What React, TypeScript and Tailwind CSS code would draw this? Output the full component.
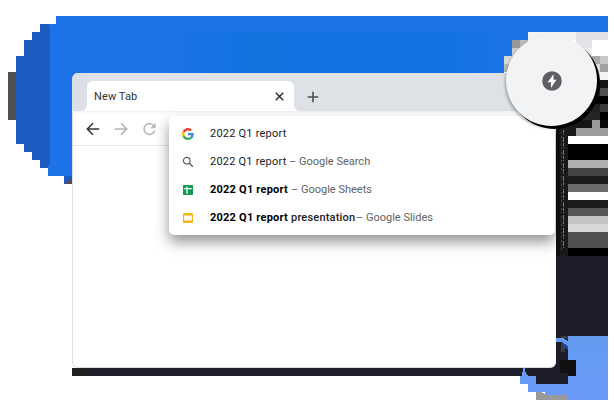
import React from "react";

type Block = [x: number, y: number, w: number, h: number, fill: string];

const blocks: Block[] = [
  [8, 72, 8, 48, "#505050"],
  [64, 176, 8, 8, "#505050"],
  [528, 32, 48, 8, "#f2f2f4"],
  [576, 32, 32, 8, "#e0e1e7"],
  [512, 40, 8, 8, "#999999"],
  [520, 40, 8, 8, "#bbbbbb"],
  [576, 40, 16, 8, "#e4e4e8"],
  [512, 48, 16, 8, "#cccccc"],
  [504, 56, 16, 8, "#d8d8d8"],
  [504, 64, 8, 8, "#bbbbbb"],
  [584, 48, 8, 8, "#eeeeee"],
  [592, 56, 8, 8, "#aaaaaa"],
  [600, 56, 8, 8, "#c8c8c8"],
  [592, 64, 8, 8, "#dddddd"],
  [600, 64, 8, 8, "#a2a2a2"],
  [592, 72, 8, 8, "#e4e4e4"],
  [600, 72, 8, 8, "#f4f4f4"],
  [592, 80, 8, 8, "#555555"],
  [600, 80, 8, 8, "#161616"],
  [592, 88, 8, 8, "#222222"],
  [600, 88, 8, 8, "#505050"],
  [592, 96, 16, 8, "#000000"],
  [584, 104, 16, 8, "#202020"],
  [600, 104, 8, 8, "#3a3a3a"],
  [576, 112, 24, 8, "#242424"],
  [600, 112, 8, 8, "#000000"],
  [576, 120, 16, 8, "#161616"],
  [592, 120, 8, 8, "#999999"],
  [600, 120, 8, 8, "#080808"],
  [568, 120, 8, 16, "#181818"],
  [576, 128, 32, 8, "#9b9b9b"],
  [568, 144, 40, 16, "#000000"],
  [568, 160, 40, 8, "#b0b0b0"],
  [568, 168, 40, 8, "#444444"],
  [568, 176, 40, 8, "#1c1c1c"],
  [568, 184, 40, 8, "#6d6d6d"],
  [568, 200, 40, 8, "#1c1c1c"],
  [568, 208, 40, 8, "#565656"],
  [568, 216, 40, 8, "#c4c4c4"],
  [568, 224, 40, 8, "#d7d7d7"],
  [568, 232, 40, 16, "#505050"],
  [568, 248, 40, 8, "#000000"],
  [568, 256, 40, 80, "#1d1d29"],
  [555, 118, 5, 138, "#0c1015"],
  [560, 118, 8, 138, "#191919"],
  [548, 256, 20, 112, "#1d1d27"],
  [72, 368, 16, 8, "#20201f"],
  [88, 368, 460, 8, "#1f1e2b"],
];

function Backdrop() {
  return (
    <svg className="absolute inset-0" width="614" height="410" shapeRendering="crispEdges" aria-hidden="true">
      <defs>
        <linearGradient id="sky" x1="0" y1="0" x2="0" y2="1">
          <stop offset="0" stopColor="#639cf0" />
          <stop offset="1" stopColor="#6b99fa" />
        </linearGradient>
        <linearGradient id="band" x1="0" y1="0" x2="1" y2="0">
          <stop offset="0" stopColor="#1c73e8" />
          <stop offset="0.25" stopColor="#1272e0" />
          <stop offset="0.8" stopColor="#1272e2" />
          <stop offset="1" stopColor="#1c73e8" />
        </linearGradient>
      </defs>
      <path d="M56 16H608V32H528V40H512V56H504V80H82V184H64V176H48V24H56Z" fill="#1c73e8" />
      <path d="M160 32H512V56H504V80H160Z" fill="url(#band)" />
      <path d="M40 24H49V29H50V165H48V168H40V160H32V152H24V144H16V56H24V40H32V32H40Z" fill="#1c5bbf" />
      {blocks.map(([x, y, w, h, fill], i) => (
        <rect key={i} x={x} y={y} width={w} height={h} fill={fill} />
      ))}
      <path d="M64 176H72V178L64 184Z" fill="#1c5bbf" />
      <path d="M563.5 130V248" stroke="#777" strokeWidth="1" strokeDasharray="3 1 1 2 5 1" />
      <path d="M561.5 132V252" stroke="#444" strokeWidth="1" strokeDasharray="1 3 2 2" />
      <path d="M568 336H608V400H568V397H545V392H528V384H520V368H568Z" fill="url(#sky)" />
      <path d="M536 392H541L547 395H568V400H536Z" fill="#999" />
      <path d="M525 368H576V360H548V368H525V371L528 376H536V384H568V376H576V360H548Z" fill="#1e1d2a" />
      <path d="M520 368H523L522 376H520Z" fill="#1e1d2a" />
      <path d="M560 360H576V376H568V373H560Z" fill="#111113" />
      <path d="M561 336H568V339H561ZM561 343H565V352H561Z" fill="#3a3b46" />
      <path d="M556 338H563L568 341V346L562 342H556Z" fill="#639cf0" />
      <path d="M562 342L568 346V350L564 347Z" fill="#1c4c98" />
    </svg>
  );
}

function BackIcon({ className }: { className: string }) {
  return (
    <svg className={className} width="14" height="14" viewBox="0 0 14 14" fill="none" stroke="currentColor" strokeWidth="1.6">
      <path d="M13.2 7H1.6M7 1.3L1.3 7L7 12.7" />
    </svg>
  );
}

function ReloadIcon() {
  return (
    <svg width="16" height="16" viewBox="0 0 24 24" fill="#b5b7b9">
      <path
        d="M17.65 6.35A7.96 7.96 0 0 0 12 4a8 8 0 1 0 7.73 10h-2.08A6 6 0 1 1 12 6c1.66 0 3.14.69 4.22 1.78L13 11h7V4z"
        transform="translate(-2.6 -1.8) scale(1.15)"
      />
    </svg>
  );
}

function GoogleIcon() {
  return (
    <svg width="12" height="12" viewBox="0 0 48 48">
      <path fill="#ea4335" d="M24 9.5c3.54 0 6.71 1.22 9.21 3.6l6.85-6.85C35.9 2.38 30.47 0 24 0 14.62 0 6.51 5.38 2.56 13.22l7.98 6.19C12.43 13.72 17.74 9.5 24 9.5z" />
      <path fill="#4285f4" d="M46.98 24.55c0-1.57-.15-3.09-.38-4.55H24v9.02h12.94c-.58 2.96-2.26 5.48-4.78 7.18l7.73 6c4.51-4.18 7.09-10.36 7.09-17.65z" />
      <path fill="#fbbc05" d="M10.53 28.59A14.5 14.5 0 0 1 9.77 24c0-1.6.27-3.14.76-4.59l-7.98-6.19A24 24 0 0 0 0 24c0 3.88.92 7.54 2.56 10.78z" />
      <path fill="#34a853" d="M24 48c6.48 0 11.93-2.13 15.89-5.81l-7.73-6C30.01 37.64 27.24 38.5 24 38.5c-6.26 0-11.57-4.22-13.47-9.91l-7.98 6.19C6.51 42.62 14.62 48 24 48z" />
    </svg>
  );
}

function SearchIcon() {
  return (
    <svg width="12" height="12" viewBox="0 0 12 12" fill="none" stroke="#5c5f62" strokeWidth="1.2">
      <circle cx="4.7" cy="4.7" r="3.3" />
      <path d="M7.1 7.1L10.8 10.8" strokeWidth="1.4" />
    </svg>
  );
}

function SheetsIcon() {
  return (
    <svg width="12" height="12" viewBox="0 0 12 12">
      <rect x="1" y="1" width="10" height="10" rx="0.8" fill="#109955" />
      <path d="M2.3 4.6H9.7M5 2.6V9.8" stroke="#fff" strokeWidth="1.3" />
    </svg>
  );
}

function SlidesIcon() {
  return (
    <svg width="12" height="12" viewBox="0 0 12 12">
      <rect x="1" y="1" width="10" height="10" rx="0.8" fill="#f8b51a" />
      <rect x="2.2" y="3.5" width="7.6" height="5" fill="#fff" />
    </svg>
  );
}

interface Suggestion {
  icon: React.ReactNode;
  query: string;
  bold?: boolean;
  extra?: string;
  source?: string;
  queryWidth: string;
}

const suggestions: Suggestion[] = [
  { icon: <GoogleIcon />, query: "2022 Q1 report", queryWidth: "w-[79px]" },
  { icon: <SearchIcon />, query: "2022 Q1 report", source: "– Google Search", queryWidth: "w-[79px]" },
  { icon: <SheetsIcon />, query: "2022 Q1 report", bold: true, source: "– Google Sheets", queryWidth: "w-[81px]" },
  { icon: <SlidesIcon />, query: "2022 Q1 report", bold: true, extra: "presentation", source: "– Google Slides", queryWidth: "w-[81px]" },
];

function Suggestions() {
  return (
    <div className="flex h-[119px] flex-col rounded-[5px] bg-white pt-[4px] shadow-[0_7px_14px_rgba(0,0,0,0.42)]">
      {suggestions.map((s, i) => (
        <div key={i} className="flex h-[28px] items-center pl-[13px] text-[11px] whitespace-nowrap">
          <span className="w-[28px] shrink-0">{s.icon}</span>
          <span
            className={`${s.queryWidth} shrink-0 tracking-[0.22px] ${s.bold ? "font-bold text-black" : "text-[#202124]"}`}
          >
            {s.query}
          </span>
          {s.extra && <span className="w-[65px] shrink-0 font-medium tracking-[0.2px] text-[#202124]">{s.extra}</span>}
          {s.source && <span className="text-[#5f6368]">{s.source}</span>}
        </div>
      ))}
    </div>
  );
}

function BrowserWindow() {
  return (
    <div className="relative flex h-[295px] w-[484px] flex-col overflow-hidden rounded-[6px] border-b border-l border-[#dedede] bg-white">
      <div className="flex h-[38px] shrink-0 bg-[#dee1e6] shadow-[0_1px_2px_rgba(0,0,0,0.08)]">
        <div className="flex w-[14px] bg-white">
          <div className="w-full rounded-br-[6px] bg-[#dcdfe5]" />
        </div>
        <div className="flex w-[207px] items-end bg-[#dee1e6]">
          <div className="flex h-[30px] w-full items-center justify-between rounded-t-[6px] bg-white pr-[10px] pl-[7px]">
            <span className="pt-[2px] text-[11px] tracking-[0.1px] text-[#303134]">New Tab</span>
            <svg width="9" height="9" viewBox="0 0 9 9" stroke="#202124" strokeWidth="1.3">
              <path d="M.8 .8L8.2 8.2M8.2 .8L.8 8.2" />
            </svg>
          </div>
        </div>
        <div className="flex flex-1 bg-white">
          <div className="flex flex-1 items-center rounded-bl-[6px] bg-[#dee1e6] pt-[9px] pl-[13px]">
            <svg width="12" height="12" viewBox="0 0 12 12" stroke="#4c4f53" strokeWidth="1.6">
              <path d="M6 .7V11.3M.7 6H11.3" />
            </svg>
          </div>
        </div>
      </div>
      <div className="flex h-[35px] shrink-0 items-center border-b border-[#e6e7e8] pt-px pl-[13px]">
        <BackIcon className="mr-[14px] text-[#36393c]" />
        <BackIcon className="mr-[14px] rotate-180 text-[#b3b5b7]" />
        <ReloadIcon />
      </div>
      <div className="absolute top-[43px] left-[96px] w-[386px]">
        <Suggestions />
      </div>
    </div>
  );
}

export default function App() {
  return (
    <main className="relative h-[410px] w-[614px] overflow-hidden bg-white pt-[73px] pl-[72px] font-[Roboto,'Liberation_Sans',sans-serif]">
      <Backdrop />
      <BrowserWindow />
      <div className="absolute top-[38px] left-[509px] size-[91px] rounded-full bg-black" />
      <div className="absolute top-[35px] left-[506px] flex size-[91px] items-center justify-center rounded-full bg-[#f1f3f4] shadow-[-1px_2px_3px_rgba(0,0,0,0.3)]">
        <svg width="20" height="20" viewBox="0 0 20 20">
          <circle cx="10" cy="10" r="9.8" fill="#5f6064" />
          <path d="M11.5 3.2L5.6 11.2H9V17L14.4 8.8H11.5Z" fill="#fff" />
        </svg>
      </div>
    </main>
  );
}
